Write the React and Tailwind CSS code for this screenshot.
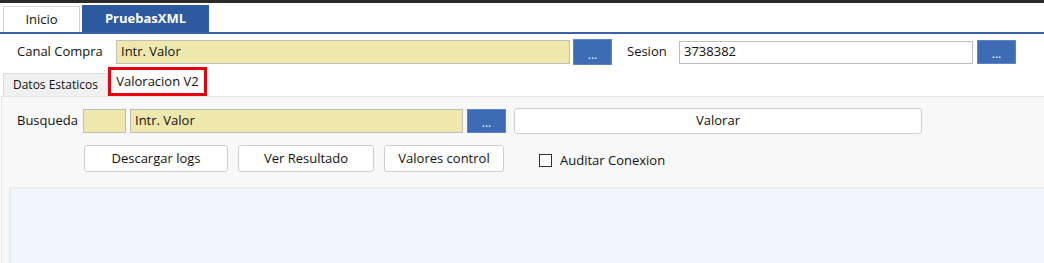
import React from "react";

const font = { fontFamily: '"Open Sans", "Noto Sans", Arial, sans-serif' };

function DotsButton({ className = "" }) {
  return (
    <button
      className={`flex items-end justify-center pb-[3px] bg-[#3d6cb5] border border-[#5a86c8] text-white text-[12px] leading-none ${className}`}
    >
      ...
    </button>
  );
}

function Btn({ label, className = "" }) {
  return (
    <button
      className={`h-[26px] bg-white border border-[#cfcfcf] rounded-[3px] text-[13px] text-[#111] ${className}`}
    >
      {label}
    </button>
  );
}

export default function App() {
  return (
    <div
      className="w-[1044px] h-[263px] overflow-hidden bg-white border-t-[3px] border-[#2a2a2a] text-[#111]"
      style={font}
    >
      {/* top tabs */}
      <div className="flex items-end h-[29px] pl-[3px]">
        <div className="w-[77px] h-[26px] flex items-center justify-center border border-b-0 border-[#d4d4d4] bg-white text-[13px]">
          Inicio
        </div>
        <div className="w-[127px] h-[27px] ml-[2px] flex items-center justify-center bg-[#2d5a9e] text-white text-[13px] font-bold">
          PruebasXML
        </div>
      </div>
      <div className="h-[2px] bg-[#3a62a8]" />

      {/* Canal Compra / Sesion */}
      <div className="flex items-center h-[26px] mt-[5px]">
        <span className="w-[116px] pl-[17px] text-[13px]">Canal Compra</span>
        <div className="w-[454px] h-[24px] flex items-center pl-[4px] bg-[#efe8ad] border border-[#bdbdbd] text-[13px]">
          Intr. Valor
        </div>
        <DotsButton className="w-[39px] h-[26px] ml-[3px]" />
        <span className="ml-[15px] w-[52px] text-[13px]">Sesion</span>
        <div className="w-[294px] h-[23px] flex items-center pl-[4px] bg-white border border-[#bdbdbd] text-[13px]">
          3738382
        </div>
        <DotsButton className="w-[39px] h-[24px] ml-[4px]" />
      </div>

      {/* inner tabs */}
      <div className="flex items-end h-[29px] mt-[2px] pl-[3px]">
        <div className="w-[105px] h-[23px] flex items-center justify-center bg-[#f0f0f0] border border-b-0 border-[#dcdcdc] text-[12px]">
          Datos Estaticos
        </div>
        <div className="w-[99px] h-[29px] flex items-center justify-center bg-white border-[3px] border-[#e8000b] text-[13px]">
          Valoracion V2
        </div>
      </div>

      {/* panel */}
      <div className="h-[200px] ml-[1px] bg-[#f8f8f8] border-t border-l border-[#e4e4e4]">
        <div className="flex items-center h-[26px] mt-[11px]">
          <span className="w-[81px] pl-[15px] text-[13px]">Busqueda</span>
          <div className="w-[43px] h-[24px] bg-[#efe8ad] border border-[#bdbdbd]" />
          <div className="w-[333px] h-[24px] ml-[4px] flex items-center pl-[4px] bg-[#efe8ad] border border-[#bdbdbd] text-[13px]">
            Intr. Valor
          </div>
          <DotsButton className="w-[39px] h-[24px] ml-[4px]" />
          <Btn label="Valorar" className="w-[408px] ml-[8px]" />
        </div>

        <div className="flex items-center h-[27px] mt-[11px] pl-[82px]">
          <Btn label="Descargar logs" className="w-[144px] h-[27px]" />
          <Btn label="Ver Resultado" className="w-[136px] h-[27px] ml-[10px]" />
          <Btn label="Valores control" className="w-[120px] h-[27px] ml-[10px]" />
          <div className="ml-[35px] flex items-center mt-[4px]">
            <span className="w-[13px] h-[13px] border border-[#333] bg-white" />
            <span className="ml-[8px] text-[13px]">Auditar Conexion</span>
          </div>
        </div>

        <div className="h-[80px] mt-[15px] ml-[7px] bg-[#f0f6fe] border-t-2 border-l-2 border-[#ececec]" />
      </div>
    </div>
  );
}
